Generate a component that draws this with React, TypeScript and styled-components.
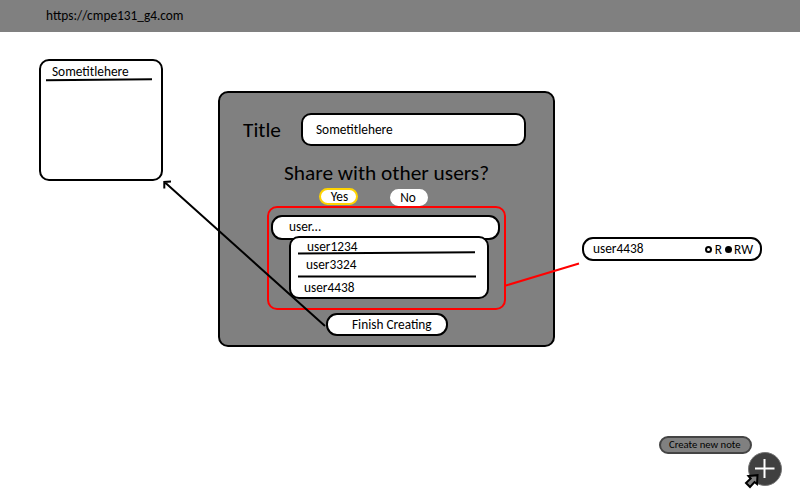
import React from "react";
import styled, { createGlobalStyle } from "styled-components";

const GlobalStyle = createGlobalStyle`
  * { box-sizing: border-box; }
  body { margin: 0; background: #fff; color: #000; font-family: Carlito, Calibri, Lato, sans-serif; overflow: hidden; }
`;

const Page = styled.div`
  width: 800px;
  height: 500px;
  display: flex;
  flex-direction: column;
`;

const AddressBar = styled.header`
  height: 32px;
  flex: none;
  background: #808080;
  display: flex;
  align-items: flex-start;
  padding: 7px 0 0 46px;
`;

const Board = styled.main`
  position: relative;
  flex: 1;
`;

const Text = styled.span<{ $size?: number; $lift?: number }>`
  display: block;
  font-size: ${(p) => p.$size ?? 13.333}px;
  line-height: 17px;
  padding-bottom: ${(p) => p.$lift ?? 0}px;
  white-space: nowrap;
`;

const Heading = styled(Text)`
  font-size: 21.333px;
  padding-top: 2px;
`;

const NoteCard = styled.article`
  position: absolute;
  left: 39px;
  top: 27px;
  width: 124px;
  height: 122px;
  border: 2px solid #000;
  border-radius: 10px;
  background: #fff;
  padding: 2px 0 0 11px;
`;

const Dialog = styled.section`
  position: absolute;
  left: 218px;
  top: 59px;
  width: 337px;
  height: 256px;
  border: 2px solid #000;
  border-radius: 10px;
  background: #808080;
  padding-top: 20px;
`;

const TitleRow = styled.label`
  display: flex;
  align-items: center;
  height: 33px;
  padding: 0 27px 0 23px;
  justify-content: space-between;
`;

const TitleField = styled.div`
  width: 225px;
  height: 33px;
  border: 2px solid #000;
  border-radius: 10px;
  background: #fff;
  display: flex;
  align-items: center;
  padding-left: 13px;
`;

const Question = styled.div`
  height: 42px;
  padding: 17px 0 0 64px;
`;

const Choices = styled.div`
  display: flex;
  gap: 32px;
  height: 18px;
  padding-left: 99px;
`;

const Choice = styled.button<{ $selected?: boolean }>`
  width: ${(p) => (p.$selected ? 39 : 38)}px;
  height: 17px;
  margin: ${(p) => (p.$selected ? 0 : 1)}px 0 0;
  padding: 0 ${(p) => (p.$selected ? 0 : 2)}px ${(p) => (p.$selected ? 1 : 0)}px ${(p) => (p.$selected ? 2 : 0)}px;
  border: 2px solid ${(p) => (p.$selected ? "#ffd400" : "#fff")};
  border-radius: 9px;
  background: #fff;
  color: #000;
  font-family: inherit;
  display: flex;
  align-items: center;
  justify-content: center;
`;

const SharePanel = styled.div`
  width: 239px;
  height: 104px;
  margin-left: 47px;
  border: 2px solid #f00;
  border-radius: 10px;
  padding: 7px 0 0 2px;
`;

const UserField = styled.div`
  width: 229px;
  height: 25px;
  border: 2px solid #000;
  border-radius: 11px;
  background: #fff;
  display: flex;
  align-items: center;
  padding: 0 0 3px 16px;
`;

const UserList = styled.div`
  position: relative;
  width: 200px;
  height: 63px;
  margin: -4px 0 0 18px;
  border: 2px solid #000;
  border-radius: 10px;
  background: #fff;
`;

const UserRow = styled.div<{ $height: number; $indent: number; $top: number }>`
  height: ${(p) => p.$height}px;
  padding: ${(p) => p.$top}px 0 0 ${(p) => p.$indent}px;
`;

const FinishButton = styled.button`
  width: 122px;
  height: 23px;
  margin: 3px 0 0 106px;
  padding: 0 0 0 24px;
  border: 2px solid #000;
  border-radius: 11px;
  background: #fff;
  color: #000;
  font-family: inherit;
  display: flex;
  align-items: center;
`;

const AccessPill = styled.div`
  position: absolute;
  left: 582px;
  top: 205px;
  width: 180px;
  height: 24px;
  border: 2px solid #000;
  border-radius: 11px;
  background: #fff;
  display: flex;
  align-items: center;
  padding: 0 7px 0 9px;
`;

const Radio = styled.span<{ $on?: boolean }>`
  width: 7px;
  height: 7px;
  flex: none;
  border: 2px solid #000;
  border-radius: 50%;
  background: ${(p) => (p.$on ? "#000" : "#fff")};
  margin: 0 ${(p) => (p.$on ? 2 : 3)}px 0 ${(p) => (p.$on ? 3 : 0)}px;
`;

const Access = styled.div`
  margin-left: auto;
  display: flex;
  align-items: center;
`;

const Hint = styled.div`
  position: absolute;
  left: 659px;
  top: 404px;
  width: 93px;
  height: 18px;
  border: 2px solid #444;
  border-radius: 9px;
  background: #808080;
  display: flex;
  align-items: center;
  padding: 0 0 2px 8px;
`;

const Overlay = styled.svg`
  position: absolute;
  left: 0;
  top: -32px;
  pointer-events: none;
`;

export default function App() {
  return (
    <Page>
      <GlobalStyle />
      <AddressBar>
        <Text>https://cmpe131_g4.com</Text>
      </AddressBar>
      <Board>
        <NoteCard>
          <Text>Sometitlehere</Text>
        </NoteCard>
        <Dialog>
          <TitleRow>
            <Heading>Title</Heading>
            <TitleField>
              <Text>Sometitlehere</Text>
            </TitleField>
          </TitleRow>
          <Question>
            <Heading>Share with other users?</Heading>
          </Question>
          <Choices>
            <Choice $selected>
              <Text>Yes</Text>
            </Choice>
            <Choice>
              <Text>No</Text>
            </Choice>
          </Choices>
          <SharePanel>
            <UserField>
              <Text>user...</Text>
            </UserField>
            <UserList>
              <UserRow $height={16} $indent={16} $top={0}>
                <Text>user1234</Text>
              </UserRow>
              <UserRow $height={22} $indent={15} $top={2}>
                <Text>user3324</Text>
              </UserRow>
              <UserRow $height={21} $indent={13} $top={3}>
                <Text>user4438</Text>
              </UserRow>
            </UserList>
          </SharePanel>
          <FinishButton>
            <Text>Finish Creating</Text>
          </FinishButton>
        </Dialog>
        <AccessPill>
          <Text $lift={1}>user4438</Text>
          <Access>
            <Radio />
            <Text>R</Text>
            <Radio $on />
            <Text>RW</Text>
          </Access>
        </AccessPill>
        <Hint>
          <Text $size={10.667}>Create new note</Text>
        </Hint>
        <Overlay width="800" height="500" viewBox="0 0 800 500" fill="none">
          <g stroke="#000" strokeWidth="2">
            <path d="M46 80.3L152 79.3" />
            <path d="M298 253.5L475 252.3" />
            <path d="M298 276.5H476" />
            <path d="M325 326L164.5 182M164.3 188.5V182L171 181.6" />
          </g>
          <path d="M506 285.5L579 263.5" stroke="#f00" strokeWidth="2" />
          <circle cx="765" cy="469" r="16.5" fill="#404040" stroke="#777" />
          <path d="M755 468.5H774.5M764.5 459V478" stroke="#fff" strokeWidth="2" />
          <path d="M748.5 476L757.5 475.2L757 484L754.5 482L750 487L746 483L750.7 478.5Z" fill="#808080" stroke="#000" strokeWidth="2" />
        </Overlay>
      </Board>
    </Page>
  );
}
